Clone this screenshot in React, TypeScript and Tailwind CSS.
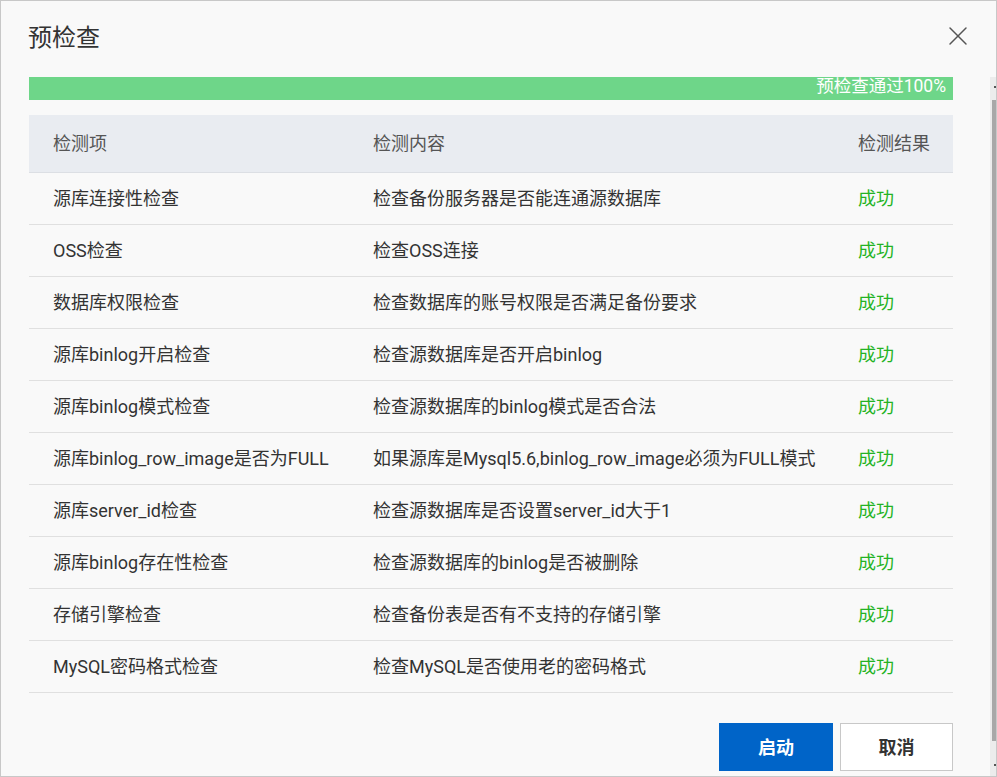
import { X } from "lucide-react";

const checks = [
  { name: "源库连接性检查", desc: "检查备份服务器是否能连通源数据库" },
  { name: "OSS检查", desc: "检查OSS连接" },
  { name: "数据库权限检查", desc: "检查数据库的账号权限是否满足备份要求" },
  { name: "源库binlog开启检查", desc: "检查源数据库是否开启binlog" },
  { name: "源库binlog模式检查", desc: "检查源数据库的binlog模式是否合法" },
  { name: "源库binlog_row_image是否为FULL", desc: "如果源库是Mysql5.6,binlog_row_image必须为FULL模式" },
  { name: "源库server_id检查", desc: "检查源数据库是否设置server_id大于1" },
  { name: "源库binlog存在性检查", desc: "检查源数据库的binlog是否被删除" },
  { name: "存储引擎检查", desc: "检查备份表是否有不支持的存储引擎" },
  { name: "MySQL密码格式检查", desc: "检查MySQL是否使用老的密码格式" },
];

export default function App() {
  return (
    <div
      className="w-[997px] h-[777px] border border-[#c8c8c8] bg-[#f9f9f9] flex flex-col text-[#333]"
      style={{ fontFamily: 'Roboto, "Noto Sans CJK SC", sans-serif' }}
    >
      {/* Header */}
      <div className="h-[76px] shrink-0 flex items-center justify-between pl-[27px] pr-[22px]">
        <h1 className="text-[24px] leading-none text-[#333] -mt-[2px]">预检查</h1>
        <X className="h-[32px] w-[32px] text-[#555] -mt-[6px]" strokeWidth={1.1} />
      </div>

      {/* Body */}
      <div className="flex-1 flex min-h-0">
        <div className="flex-1 pl-[28px] pr-[37px] flex flex-col">
          <div className="h-[23px] bg-[#6ed689] flex justify-end pr-[7px]">
            <span className="text-white text-[17.5px] leading-[19px]">预检查通过100%</span>
          </div>

          {/* Table */}
          <div className="mt-[15px]">
            <div className="grid grid-cols-[320px_485px_1fr] h-[58px] items-center bg-[#e9ecf1] border-b border-[#dcdfe4] text-[#555] text-[18px]">
              <div className="pl-6">检测项</div>
              <div className="pl-6">检测内容</div>
              <div className="pl-6">检测结果</div>
            </div>
            {checks.map((c) => (
              <div
                key={c.name}
                className="grid grid-cols-[320px_485px_1fr] h-[52px] items-center border-b border-[#e0e0e0] text-[18px]"
              >
                <div className="pl-6 whitespace-nowrap">{c.name}</div>
                <div className="pl-6 whitespace-nowrap">{c.desc}</div>
                <div className="pl-6 text-[#24b324]">成功</div>
              </div>
            ))}
          </div>

          {/* Footer */}
          <div className="mt-[30px] flex justify-end gap-[7px]">
            <button className="w-[114px] h-[48px] bg-[#0064c8] text-white font-bold text-[18px]">
              启动
            </button>
            <button className="w-[113px] h-[48px] bg-white border border-[#c8c8c8] text-[#333] font-bold text-[18px]">
              取消
            </button>
          </div>
        </div>

        {/* Scrollbar */}
        <div className="w-[6px] bg-[#ececec] flex flex-col items-end">
          <div className="h-[23px] w-full flex items-start justify-end pt-[9px]">
            <div className="w-[2px] h-[2px] bg-[#555]" />
          </div>
          <div className="h-[641px] w-[4px] bg-[#a8a8a8]" />
          <div className="flex-1 w-full flex items-end justify-end pb-[10px]">
            <div className="w-[2px] h-[2px] bg-[#555]" />
          </div>
        </div>
      </div>
    </div>
  );
}
